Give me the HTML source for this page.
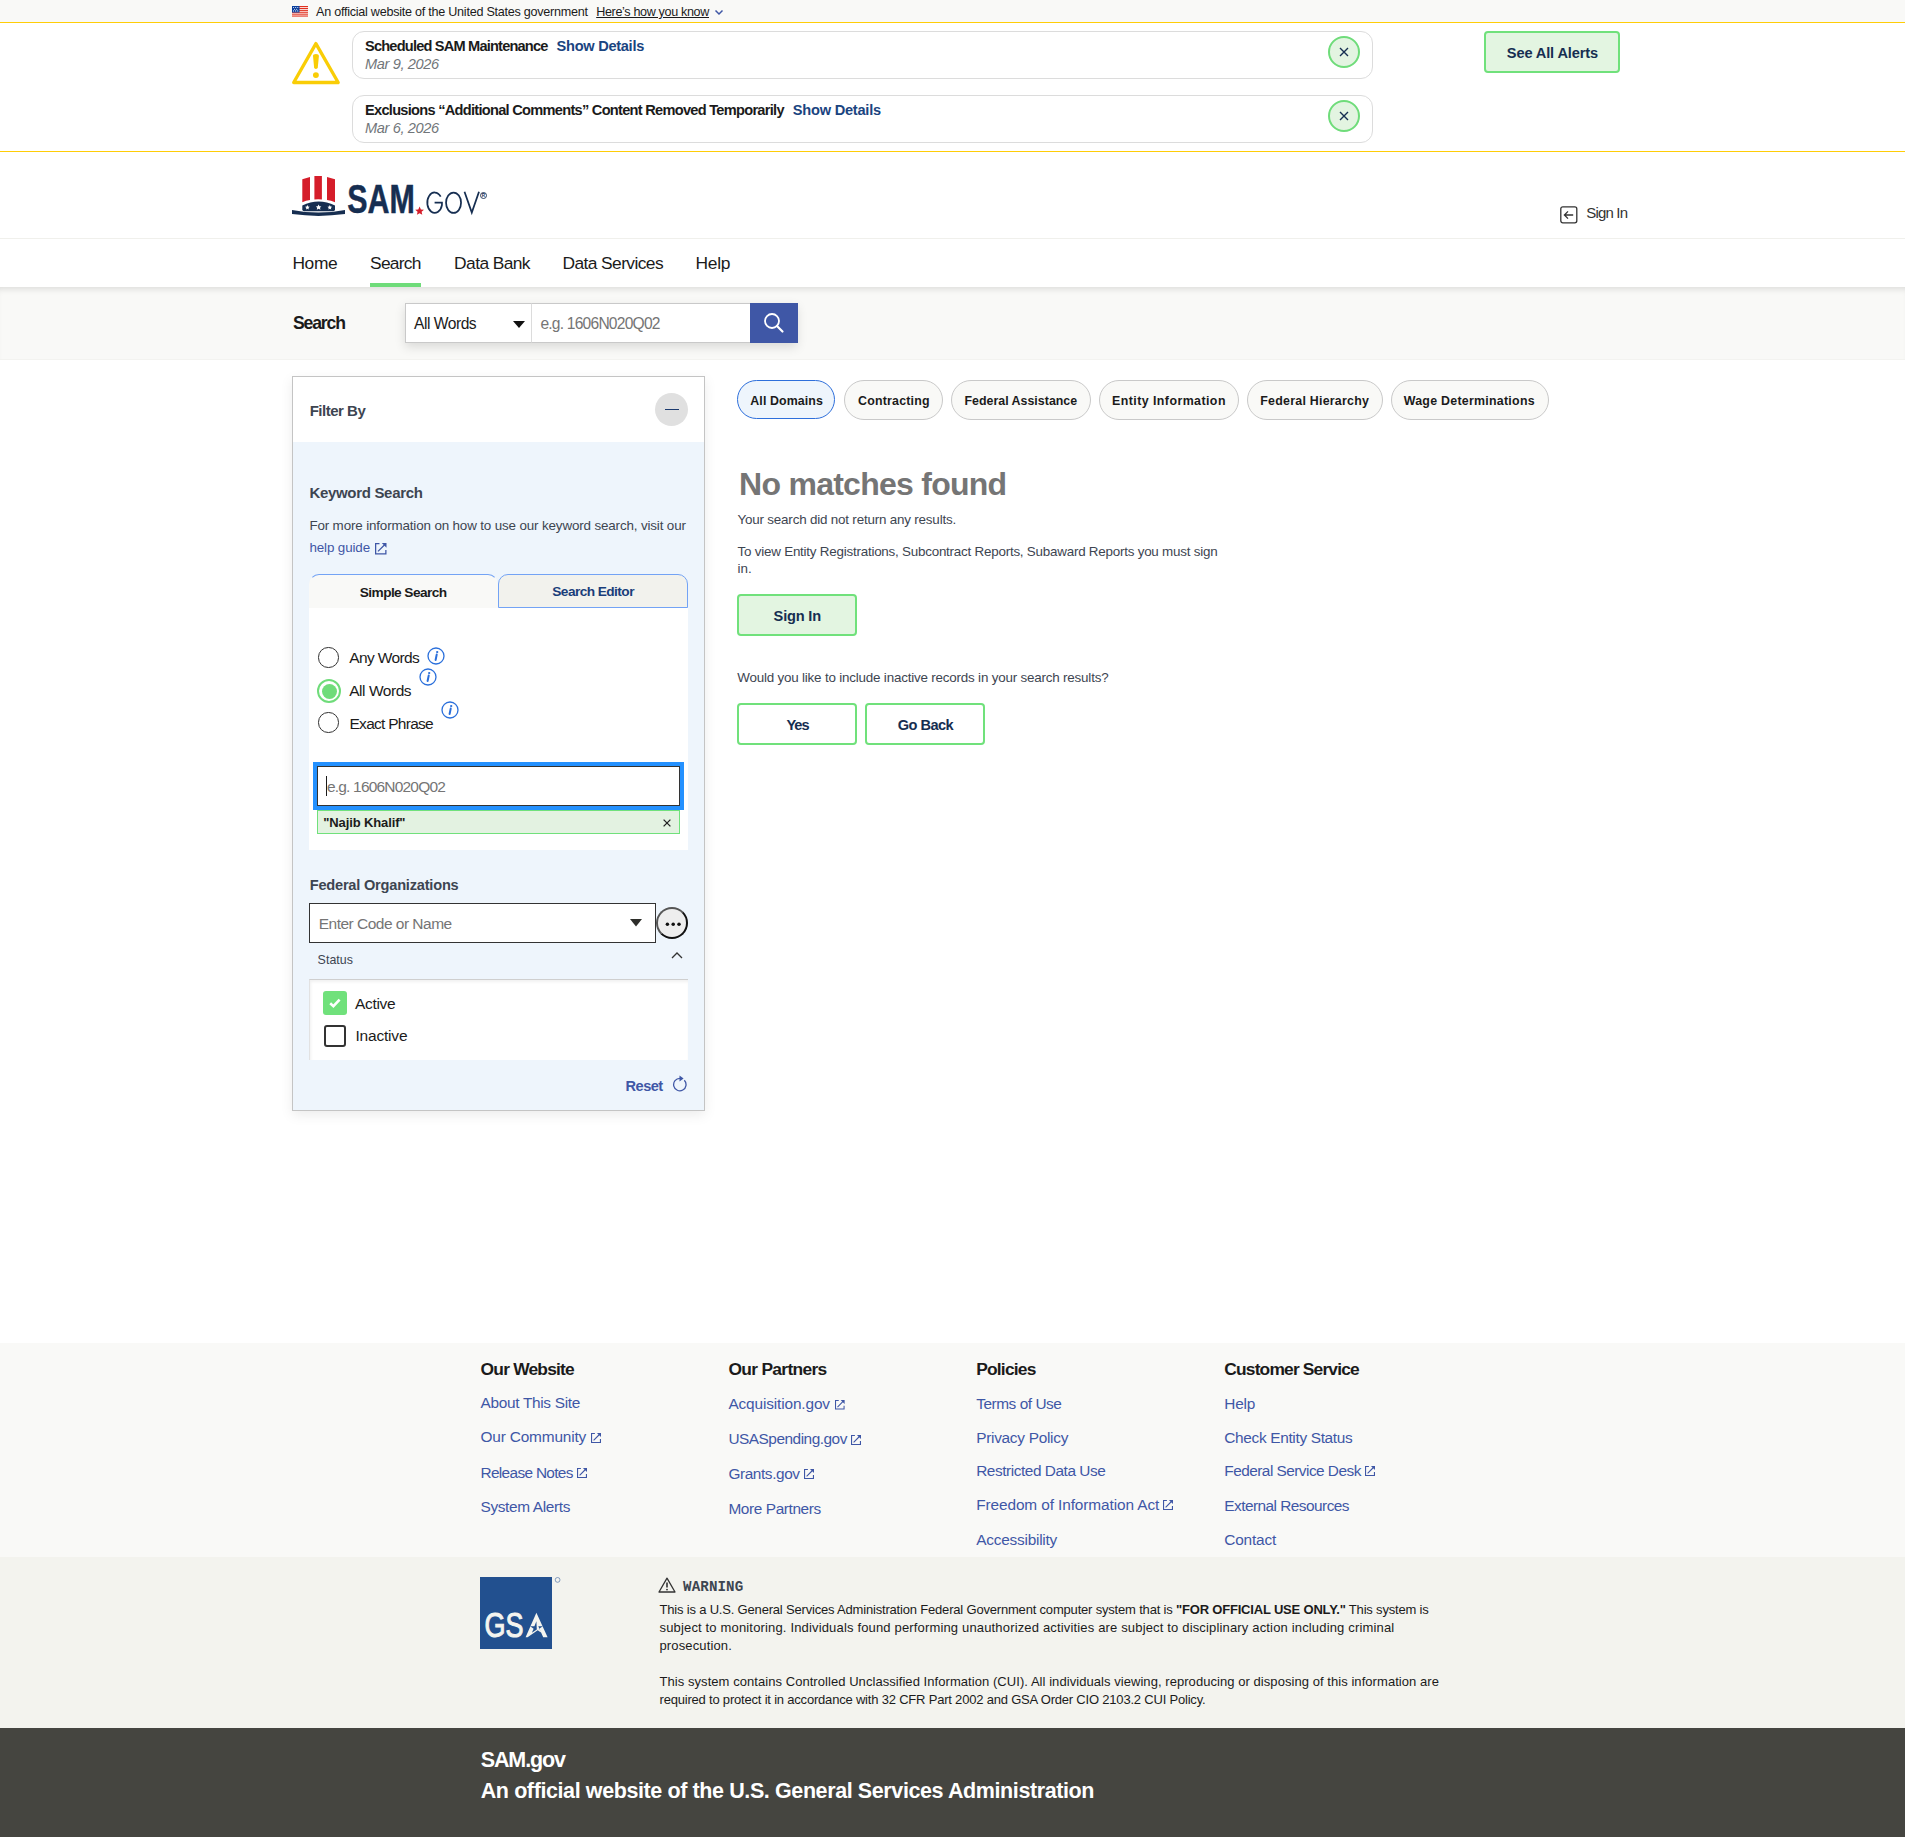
<!DOCTYPE html><html><head><meta charset="utf-8"><style>
*{box-sizing:content-box}
html,body{margin:0;padding:0}
body{width:1905px;height:1837px;position:relative;overflow:hidden;background:#fff;font-family:"Liberation Sans",sans-serif}
.a{position:absolute}
.t{position:absolute;white-space:pre;line-height:1;transform-origin:0 0}
.close{width:28px;height:28px;border:2px solid #6fdc7a;border-radius:50%;background:#e3f4e1}
.gbtn{border:2px solid #70e17b;border-radius:4px;background:#e3f5e1}
.pill{border:1px solid #c9c9c9;border-radius:20px;background:#f9f9f7}
.dot{width:3.6px;height:3.6px;border-radius:50%;background:#111}
</style></head><body>
<!-- gov banner -->
<div class="a" style="left:0;top:0;width:1905px;height:22px;background:#f9f9f7"></div>
<div class="a" style="left:0;top:22px;width:1905px;height:1px;background:#ffcd07"></div>
<svg class="a" style="left:292px;top:6px" width="16" height="11" viewBox="0 0 16 11"><rect width="16" height="11" fill="#fff"/><g fill="#e0301e"><rect y="0" width="16" height="1.1"/><rect y="1.9" width="16" height="1.1"/><rect y="3.8" width="16" height="1.1"/><rect y="5.7" width="16" height="1.1"/><rect y="7.6" width="16" height="1.1"/><rect y="9.5" width="16" height="1.1"/></g><rect width="7.5" height="6.5" fill="#0a3f9e"/><g fill="#fff"><circle cx="1.6" cy="1.5" r=".55"/><circle cx="3.7" cy="1.5" r=".55"/><circle cx="5.8" cy="1.5" r=".55"/><circle cx="2.6" cy="3.2" r=".55"/><circle cx="4.7" cy="3.2" r=".55"/><circle cx="1.6" cy="4.9" r=".55"/><circle cx="3.7" cy="4.9" r=".55"/><circle cx="5.8" cy="4.9" r=".55"/></g></svg>
<svg class="a" style="left:714px;top:9px" width="10" height="7" viewBox="0 0 10 7"><path d="M1.5 1.5L5 5L8.5 1.5" fill="none" stroke="#3f57a6" stroke-width="1.5"/></svg>

<!-- alerts -->
<div class="a" style="left:0;top:151px;width:1905px;height:1px;background:#ffcd07"></div>
<svg class="a" style="left:288px;top:36px" width="56" height="54" viewBox="0 0 56 54"><path d="M27.9 7.6L50.2 46.5H5.7Z" fill="none" stroke="#f9cd06" stroke-width="3.3" stroke-linejoin="round"/><path d="M25 19.7Q25 17.9 27.9 17.9Q30.9 17.9 30.9 19.9L29.8 31.5Q29.6 32.9 27.9 32.9Q26.3 32.9 26.1 31.5Z" fill="#f9cd06"/><circle cx="27.9" cy="39.1" r="2.95" fill="#f9cd06"/></svg>
<div class="a box" style="left:352px;top:31px;width:1019px;height:46px;border:1px solid #dcdcdc;border-radius:12px"></div>
<div class="a box" style="left:352px;top:95px;width:1019px;height:46px;border:1px solid #dcdcdc;border-radius:12px"></div>
<div class="a close" style="left:1328px;top:36px"></div>
<div class="a close" style="left:1328px;top:100px"></div>
<svg class="a" style="left:1339px;top:47px" width="10" height="10" viewBox="0 0 10 10"><path d="M1 1L9 9M9 1L1 9" stroke="#162e51" stroke-width="1.4"/></svg>
<svg class="a" style="left:1339px;top:111px" width="10" height="10" viewBox="0 0 10 10"><path d="M1 1L9 9M9 1L1 9" stroke="#162e51" stroke-width="1.4"/></svg>
<div class="a gbtn" style="left:1484px;top:31px;width:132px;height:38px"></div>

<!-- header -->
<svg class="a" style="left:291px;top:175px" width="197" height="43" viewBox="0 0 197 43">
  <g fill="#d51d2a"><path d="M11.3 4.2L19 2V25.1Q15 25.6 11.3 27.3Z"/><path d="M23.4 1H30.9V24.4Q27.2 24.1 23.4 24.4Z"/><path d="M36 2L44 4.2V27.3Q40 25.6 36 25.1Z"/></g>
  <path d="M11.3 30.6Q27.6 22.3 44 30.6V34.4Q44 36.2 42 36.2H13.3Q11.3 36.2 11.3 34.4Z" fill="#162e51"/>
  <g fill="#fff"><path d="M16.4 30.1l.7 1.5 1.6.2-1.2 1.1.3 1.6-1.4-.8-1.4.8.3-1.6-1.2-1.1 1.6-.2z"/><path d="M27.6 29.4l.9 1.8 1.9.3-1.4 1.3.4 1.9-1.8-.9-1.8.9.4-1.9-1.4-1.3 1.9-.3z"/><path d="M38.8 30.1l.7 1.5 1.6.2-1.2 1.1.3 1.6-1.4-.8-1.4.8.3-1.6-1.2-1.1 1.6-.2z"/></g>
  <path d="M1 35Q27.5 40.2 54 35V39.1Q27.5 42.7 1 39.1Z" fill="#162e51"/>
  <text x="56.3" y="38" font-family="Liberation Sans" font-weight="700" font-size="40" fill="#162e51" stroke="#162e51" stroke-width=".5" textLength="67.5" lengthAdjust="spacingAndGlyphs">SAM</text>
  <path d="M128.6 31.5l1.3 2.9 3.1.3-2.4 2 .7 3.1-2.7-1.6-2.7 1.6.7-3.1-2.4-2 3.1-.3z" fill="#d51d2a"/>
  <g fill="none" stroke="#162e51" stroke-width="1.75"><path d="M149.7 21.6A7.45 10.2 0 1 0 150.95 30.2V27.6H143.6"/><ellipse cx="162.55" cy="27.75" rx="7.5" ry="10.2"/><path d="M173.5 16.7L180.8 37.6L188 16.7"/></g>
  <circle cx="192.5" cy="20.5" r="3" fill="none" stroke="#162e51" stroke-width=".9"/><text x="190.8" y="22.3" font-family="Liberation Sans" font-size="4.6" font-weight="700" fill="#162e51">R</text>
</svg>
<svg class="a" style="left:1560px;top:206px" width="18" height="18" viewBox="0 0 18 18"><rect x=".8" y=".8" width="16" height="16" rx="2" fill="none" stroke="#333" stroke-width="1.3"/><path d="M13.2 9H4.6M8 5.4L4.4 9L8 12.6" fill="none" stroke="#333" stroke-width="1.3"/></svg>
<div class="a" style="left:0;top:238px;width:1905px;height:1px;background:#f0f0ec"></div>
<div class="a" style="left:370px;top:283px;width:51px;height:4px;background:#6fdc7a"></div>

<!-- search band -->
<div class="a" style="left:0;top:287px;width:1905px;height:73px;background:#f9f9f7;box-shadow:inset 0 6px 6px -4px rgba(0,0,0,.12)"></div>
<div class="a" style="left:0;top:359px;width:1905px;height:1px;background:#f3f3f0"></div>
<div class="a" style="left:405px;top:303px;width:392px;height:40px;box-shadow:0 4px 10px rgba(0,0,0,.13)"></div>
<div class="a" style="left:405px;top:303px;width:125px;height:38px;background:#fff;border:1px solid #c9c9c9"></div>
<div class="a" style="left:531px;top:303px;width:218px;height:38px;background:#fff;border:1px solid #c9c9c9;border-left:1px solid #dcdcdc"></div>
<svg class="a" style="left:513px;top:321px" width="12" height="7" viewBox="0 0 12 7"><path d="M0 0H12L6 7Z" fill="#111"/></svg>
<div class="a" style="left:750px;top:303px;width:48px;height:40px;background:#3f57a6"></div>
<svg class="a" style="left:763px;top:312px" width="22" height="22" viewBox="0 0 22 22"><circle cx="9" cy="9" r="7" fill="none" stroke="#fff" stroke-width="1.8"/><path d="M14 14L19.5 19.5" stroke="#fff" stroke-width="2.2" stroke-linecap="round"/></svg>

<!-- filter panel -->
<div class="a" style="left:292px;top:376px;width:411px;height:733px;border:1px solid #c4c4c4;background:#fff;box-shadow:0 4px 12px rgba(0,0,0,.08)"></div>
<div class="a" style="left:293px;top:442px;width:411px;height:668px;background:#eef5fc"></div>
<div class="a" style="left:655px;top:393px;width:33px;height:33px;border-radius:50%;background:#e0e0e0"></div>
<div class="a" style="left:665px;top:408.6px;width:14px;height:1.7px;background:#1b3a6e"></div>
<svg class="a" style="left:375px;top:543px" width="11.5" height="11.5" viewBox="0 0 10 10"><path d="M3.9 .55H.55V9.45H9.45V6.1M2.6 7.3L8.4 1.5" fill="none" stroke="#3f57a6" stroke-width="1.1"/><path d="M5.9 0H10V4.1Z" fill="#3f57a6"/></svg>
<div class="a" style="left:309px;top:608px;width:379px;height:242px;background:#fff"></div>
<div class="a" style="left:309px;top:574px;width:187px;height:33px;background:#f9f9f7;border-top:1.3px solid #73a3f5;border-left:1.3px solid transparent;border-right:1.3px solid transparent;border-radius:10px 10px 0 0"></div>
<div class="a" style="left:498px;top:574px;width:188px;height:32px;background:#f2f2ed;border:1.3px solid #73a3f5;border-radius:10px 10px 0 0"></div>
<div class="a" style="left:318.2px;top:647.2px;width:18.4px;height:18.4px;border:1.7px solid #333;border-radius:50%;background:#fff"></div>
<div class="a" style="left:317px;top:679px;width:20px;height:20px;border:2.2px solid #6fdc7a;border-radius:50%;background:#fff"></div>
<div class="a" style="left:321.5px;top:683.5px;width:15px;height:15px;border-radius:50%;background:#6fdc7a"></div>
<div class="a" style="left:318.2px;top:712.2px;width:18.4px;height:18.4px;border:1.7px solid #333;border-radius:50%;background:#fff"></div>
<svg class="a" style="left:427px;top:647.2px" width="18" height="18" viewBox="0 0 18 18"><circle cx="9" cy="9" r="8" fill="none" stroke="#2a6fdb" stroke-width="1.3"/><path d="M9.7 7.6L8.6 13" stroke="#2a6fdb" stroke-width="2" stroke-linecap="round"/><circle cx="10.2" cy="5.1" r="1.15" fill="#2a6fdb"/></svg>
<svg class="a" style="left:419.1px;top:668.1px" width="18" height="18" viewBox="0 0 18 18"><circle cx="9" cy="9" r="8" fill="none" stroke="#2a6fdb" stroke-width="1.3"/><path d="M9.7 7.6L8.6 13" stroke="#2a6fdb" stroke-width="2" stroke-linecap="round"/><circle cx="10.2" cy="5.1" r="1.15" fill="#2a6fdb"/></svg>
<svg class="a" style="left:441px;top:701px" width="18" height="18" viewBox="0 0 18 18"><circle cx="9" cy="9" r="8" fill="none" stroke="#2a6fdb" stroke-width="1.3"/><path d="M9.7 7.6L8.6 13" stroke="#2a6fdb" stroke-width="2" stroke-linecap="round"/><circle cx="10.2" cy="5.1" r="1.15" fill="#2a6fdb"/></svg>
<div class="a" style="left:313px;top:762px;width:371px;height:48px;background:#2491ff"></div>
<div class="a" style="left:317px;top:766px;width:361px;height:38px;background:#fff;border:1px solid #333"></div>
<div class="a" style="left:326px;top:776px;width:1.3px;height:20px;background:#1b1b1b"></div>
<div class="a" style="left:317px;top:810px;width:361px;height:22px;background:#e3f2e1;border:1px solid #70e17b"></div>
<svg class="a" style="left:663px;top:819px" width="8" height="8" viewBox="0 0 8 8"><path d="M.6 .6L7.4 7.4M7.4 .6L.6 7.4" stroke="#222" stroke-width="1.3"/></svg>
<div class="a" style="left:309px;top:903px;width:345px;height:38px;background:#fff;border:1px solid #333"></div>
<svg class="a" style="left:630px;top:919px" width="12" height="8" viewBox="0 0 12 8"><path d="M0 0H12L6 7.5Z" fill="#2d2e2a"/></svg>
<div class="a" style="left:655.8px;top:907px;width:28px;height:28px;border-radius:50%;background:#eee;border:2px solid #111;border-top-color:#555;border-left-color:#555"></div>
<g></g>
<svg class="a" style="left:664px;top:920px" width="18" height="8" viewBox="0 0 18 8"><circle cx="3.4" cy="4.2" r="1.75" fill="#111"/><circle cx="9.2" cy="4.2" r="1.75" fill="#111"/><circle cx="15" cy="4.2" r="1.75" fill="#111"/></svg>
<svg class="a" style="left:671px;top:951px" width="12" height="8" viewBox="0 0 12 8"><path d="M1 7L6 2L11 7" fill="none" stroke="#333" stroke-width="1.3"/></svg>
<div class="a" style="left:309px;top:979px;width:378px;height:80px;background:#fff;border-top:1.5px solid #cfcfcf;border-left:1.5px solid #e2e2e2;box-shadow:inset 1px 2px 3px rgba(0,0,0,.06)"></div>
<div class="a" style="left:323px;top:991px;width:24px;height:24px;border-radius:3px;background:#70e17b"></div>
<svg class="a" style="left:327px;top:995px" width="16" height="16" viewBox="0 0 16 16"><path d="M3.2 8.3L6.4 11.2L12.6 4.6" fill="none" stroke="#fff" stroke-width="2.6"/></svg>
<div class="a" style="left:324px;top:1025px;width:18px;height:18px;border-radius:3px;border:2px solid #333;background:#fff"></div>
<svg class="a" style="left:672px;top:1075px" width="16" height="17" viewBox="0 0 16 17"><path d="M12.3 5.3A6.2 6.2 0 1 1 8 3.4" fill="none" stroke="#3f57a6" stroke-width="1.3"/><path d="M7.5 .6L11.6 3.5L7.5 6.4Z" fill="#3f57a6"/></svg>

<!-- pills -->
<div class="a pill" style="left:737px;top:380px;width:96px;height:37px;background:#eef5fc;border:1.5px solid #2e6fdb"></div>
<div class="a pill" style="left:844px;top:380px;width:97px;height:38px"></div>
<div class="a pill" style="left:951px;top:380px;width:138px;height:38px"></div>
<div class="a pill" style="left:1099px;top:380px;width:138px;height:38px"></div>
<div class="a pill" style="left:1247px;top:380px;width:134px;height:38px"></div>
<div class="a pill" style="left:1391px;top:380px;width:156px;height:38px"></div>

<!-- results buttons -->
<div class="a gbtn" style="left:737px;top:594px;width:116px;height:38px"></div>
<div class="a gbtn" style="left:737px;top:703px;width:116px;height:38px;background:#fff"></div>
<div class="a gbtn" style="left:865px;top:703px;width:116px;height:38px;background:#fff"></div>

<!-- footer -->
<div class="a" style="left:0;top:1343px;width:1905px;height:214px;background:#f9f9f7"></div>
<div class="a" style="left:0;top:1557px;width:1905px;height:171px;background:#f3f3ee"></div>
<div class="a" style="left:0;top:1728px;width:1905px;height:109px;background:#454540"></div>
<svg class="a" style="left:590.5px;top:1433px" width="10" height="10" viewBox="0 0 10 10"><path d="M3.9 .55H.55V9.45H9.45V6.1M2.6 7.3L8.4 1.5" fill="none" stroke="#3f57a6" stroke-width="1.1"/><path d="M5.9 0H10V4.1Z" fill="#3f57a6"/></svg>
<svg class="a" style="left:577.3px;top:1468px" width="10" height="10" viewBox="0 0 10 10"><path d="M3.9 .55H.55V9.45H9.45V6.1M2.6 7.3L8.4 1.5" fill="none" stroke="#3f57a6" stroke-width="1.1"/><path d="M5.9 0H10V4.1Z" fill="#3f57a6"/></svg>
<svg class="a" style="left:835px;top:1400px" width="9.6" height="9.6" viewBox="0 0 10 10"><path d="M3.9 .55H.55V9.45H9.45V6.1M2.6 7.3L8.4 1.5" fill="none" stroke="#3f57a6" stroke-width="1.1"/><path d="M5.9 0H10V4.1Z" fill="#3f57a6"/></svg>
<svg class="a" style="left:851.2px;top:1434.6px" width="10" height="10" viewBox="0 0 10 10"><path d="M3.9 .55H.55V9.45H9.45V6.1M2.6 7.3L8.4 1.5" fill="none" stroke="#3f57a6" stroke-width="1.1"/><path d="M5.9 0H10V4.1Z" fill="#3f57a6"/></svg>
<svg class="a" style="left:803.5px;top:1469.4px" width="10" height="10" viewBox="0 0 10 10"><path d="M3.9 .55H.55V9.45H9.45V6.1M2.6 7.3L8.4 1.5" fill="none" stroke="#3f57a6" stroke-width="1.1"/><path d="M5.9 0H10V4.1Z" fill="#3f57a6"/></svg>
<svg class="a" style="left:1163.1px;top:1500.4px" width="10" height="10" viewBox="0 0 10 10"><path d="M3.9 .55H.55V9.45H9.45V6.1M2.6 7.3L8.4 1.5" fill="none" stroke="#3f57a6" stroke-width="1.1"/><path d="M5.9 0H10V4.1Z" fill="#3f57a6"/></svg>
<svg class="a" style="left:1364.7px;top:1466.4px" width="10" height="10" viewBox="0 0 10 10"><path d="M3.9 .55H.55V9.45H9.45V6.1M2.6 7.3L8.4 1.5" fill="none" stroke="#3f57a6" stroke-width="1.1"/><path d="M5.9 0H10V4.1Z" fill="#3f57a6"/></svg>
<svg class="a" style="left:480px;top:1577px" width="82" height="72" viewBox="0 0 82 72"><rect width="72" height="72" fill="#22508f"/>
<text x="4.6" y="60" font-family="Liberation Sans" font-size="35" font-weight="400" fill="#f4f4ef" stroke="#f4f4ef" stroke-width="1" textLength="39" lengthAdjust="spacingAndGlyphs">GS</text>
<path d="M56.4 35.7L67.6 60.3H63.2L58.3 49.3H62.8L59.6 51.6L60.9 55.4L57.7 53.2L47.6 60.3H45.6ZM56.4 44.2L54.4 49.3H50.2L53.6 51.8L51.9 55.7L56.8 52.5Z" fill="#f4f4ef" fill-rule="evenodd"/>
<circle cx="77.6" cy="2.9" r="2.4" fill="none" stroke="#5577aa" stroke-width=".7"/></svg>
<svg class="a" style="left:658px;top:1577px" width="18" height="16" viewBox="0 0 18 16"><path d="M9 1.2L17 15H1Z" fill="none" stroke="#333" stroke-width="1.3" stroke-linejoin="round"/><path d="M9 5.5V10.5" stroke="#333" stroke-width="1.6"/><circle cx="9" cy="12.6" r=".9" fill="#333"/></svg>

<div class="t" id="t0" style="left:316.00px;top:6.000px;font-size:12.6px;font-weight:400;color:#1b1b1b;font-family:'Liberation Sans',sans-serif;letter-spacing:-0.253px;">An official website of the United States government</div>
<div class="t" id="t1" style="left:596.20px;top:6.000px;font-size:12.6px;font-weight:400;color:#1b1b1b;font-family:'Liberation Sans',sans-serif;letter-spacing:-0.351px;text-decoration:underline;text-underline-offset:1px;">Here’s how you know</div>
<div class="t" id="t2" style="left:365.00px;top:39.000px;font-size:14.6px;font-weight:700;color:#1b1b1b;font-family:'Liberation Sans',sans-serif;letter-spacing:-0.805px;">Scheduled SAM Maintenance</div>
<div class="t" id="t3" style="left:556.60px;top:39.000px;font-size:14.6px;font-weight:700;color:#1a4480;font-family:'Liberation Sans',sans-serif;letter-spacing:-0.286px;">Show Details</div>
<div class="t" id="t4" style="left:365.00px;top:57.000px;font-size:14.6px;font-weight:400;color:#71767a;font-family:'Liberation Sans',sans-serif;font-style:italic;letter-spacing:-0.381px;">Mar 9, 2026</div>
<div class="t" id="t5" style="left:365.00px;top:103.000px;font-size:14.6px;font-weight:700;color:#1b1b1b;font-family:'Liberation Sans',sans-serif;letter-spacing:-0.719px;">Exclusions “Additional Comments” Content Removed Temporarily</div>
<div class="t" id="t6" style="left:792.80px;top:103.000px;font-size:14.6px;font-weight:700;color:#1a4480;font-family:'Liberation Sans',sans-serif;letter-spacing:-0.227px;">Show Details</div>
<div class="t" id="t7" style="left:365.00px;top:121.000px;font-size:14.6px;font-weight:400;color:#71767a;font-family:'Liberation Sans',sans-serif;font-style:italic;letter-spacing:-0.381px;">Mar 6, 2026</div>
<div class="t" id="t8" style="left:1506.80px;top:46.000px;font-size:14.6px;font-weight:700;color:#162e51;font-family:'Liberation Sans',sans-serif;letter-spacing:-0.130px;">See All Alerts</div>
<div class="t" id="t9" style="left:1586.20px;top:205.000px;font-size:15.0px;font-weight:400;color:#333333;font-family:'Liberation Sans',sans-serif;letter-spacing:-0.815px;">Sign In</div>
<div class="t" id="t10" style="left:292.40px;top:255.000px;font-size:17.4px;font-weight:400;color:#1b1b1b;font-family:'Liberation Sans',sans-serif;letter-spacing:-0.373px;">Home</div>
<div class="t" id="t11" style="left:370.10px;top:255.000px;font-size:17.4px;font-weight:400;color:#1b1b1b;font-family:'Liberation Sans',sans-serif;letter-spacing:-0.768px;">Search</div>
<div class="t" id="t12" style="left:454.10px;top:255.000px;font-size:17.4px;font-weight:400;color:#1b1b1b;font-family:'Liberation Sans',sans-serif;letter-spacing:-0.591px;">Data Bank</div>
<div class="t" id="t13" style="left:562.50px;top:255.000px;font-size:17.4px;font-weight:400;color:#1b1b1b;font-family:'Liberation Sans',sans-serif;letter-spacing:-0.596px;">Data Services</div>
<div class="t" id="t14" style="left:695.60px;top:255.000px;font-size:17.4px;font-weight:400;color:#1b1b1b;font-family:'Liberation Sans',sans-serif;letter-spacing:-0.345px;">Help</div>
<div class="t" id="t15" style="left:292.60px;top:314.000px;font-size:18.2px;font-weight:700;color:#1b1b1b;font-family:'Liberation Sans',sans-serif;letter-spacing:-1.200px;transform:scaleX(0.9687);">Search</div>
<div class="t" id="t16" style="left:414.00px;top:316.000px;font-size:15.6px;font-weight:400;color:#1b1b1b;font-family:'Liberation Sans',sans-serif;letter-spacing:-0.471px;">All Words</div>
<div class="t" id="t17" style="left:540.40px;top:316.000px;font-size:15.6px;font-weight:400;color:#757575;font-family:'Liberation Sans',sans-serif;letter-spacing:-0.781px;">e.g. 1606N020Q02</div>
<div class="t" id="t18" style="left:309.70px;top:403.000px;font-size:15.0px;font-weight:700;color:#3d4551;font-family:'Liberation Sans',sans-serif;letter-spacing:-0.491px;">Filter By</div>
<div class="t" id="t19" style="left:309.40px;top:485.000px;font-size:15.0px;font-weight:700;color:#3d4551;font-family:'Liberation Sans',sans-serif;letter-spacing:-0.310px;">Keyword Search</div>
<div class="t" id="t20" style="left:309.40px;top:519.000px;font-size:13.4px;font-weight:400;color:#3d4551;font-family:'Liberation Sans',sans-serif;letter-spacing:-0.143px;">For more information on how to use our keyword search, visit our</div>
<div class="t" id="t21" style="left:309.40px;top:541.000px;font-size:13.4px;font-weight:400;color:#3f57a6;font-family:'Liberation Sans',sans-serif;letter-spacing:-0.121px;">help guide</div>
<div class="t" id="t22" style="left:359.80px;top:586.000px;font-size:13.7px;font-weight:700;color:#1b1b1b;font-family:'Liberation Sans',sans-serif;letter-spacing:-0.588px;">Simple Search</div>
<div class="t" id="t23" style="left:552.30px;top:585.000px;font-size:13.7px;font-weight:700;color:#1a3e7a;font-family:'Liberation Sans',sans-serif;letter-spacing:-0.569px;">Search Editor</div>
<div class="t" id="t24" style="left:349.20px;top:650.000px;font-size:15.5px;font-weight:400;color:#1b1b1b;font-family:'Liberation Sans',sans-serif;letter-spacing:-0.615px;">Any Words</div>
<div class="t" id="t25" style="left:349.20px;top:683.000px;font-size:15.5px;font-weight:400;color:#1b1b1b;font-family:'Liberation Sans',sans-serif;letter-spacing:-0.450px;">All Words</div>
<div class="t" id="t26" style="left:349.50px;top:716.000px;font-size:15.5px;font-weight:400;color:#1b1b1b;font-family:'Liberation Sans',sans-serif;letter-spacing:-0.724px;">Exact Phrase</div>
<div class="t" id="t27" style="left:327.00px;top:779.000px;font-size:15.5px;font-weight:400;color:#757575;font-family:'Liberation Sans',sans-serif;letter-spacing:-0.812px;">e.g. 1606N020Q02</div>
<div class="t" id="t28" style="left:323.30px;top:816.000px;font-size:13.0px;font-weight:700;color:#1b1b1b;font-family:'Liberation Sans',sans-serif;letter-spacing:-0.125px;">"Najib Khalif"</div>
<div class="t" id="t29" style="left:309.70px;top:878.000px;font-size:14.6px;font-weight:700;color:#3d4551;font-family:'Liberation Sans',sans-serif;letter-spacing:-0.213px;">Federal Organizations</div>
<div class="t" id="t30" style="left:318.70px;top:916.000px;font-size:15.5px;font-weight:400;color:#757575;font-family:'Liberation Sans',sans-serif;letter-spacing:-0.509px;">Enter Code or Name</div>
<div class="t" id="t31" style="left:317.60px;top:954.000px;font-size:12.4px;font-weight:400;color:#3d4551;font-family:'Liberation Sans',sans-serif;letter-spacing:0.043px;">Status</div>
<div class="t" id="t32" style="left:355.10px;top:996.000px;font-size:15.5px;font-weight:400;color:#1b1b1b;font-family:'Liberation Sans',sans-serif;letter-spacing:-0.353px;">Active</div>
<div class="t" id="t33" style="left:355.50px;top:1028.000px;font-size:15.5px;font-weight:400;color:#1b1b1b;font-family:'Liberation Sans',sans-serif;letter-spacing:-0.203px;">Inactive</div>
<div class="t" id="t34" style="left:625.50px;top:1079.000px;font-size:14.6px;font-weight:700;color:#3f57a6;font-family:'Liberation Sans',sans-serif;letter-spacing:-0.510px;">Reset</div>
<div class="t" id="t35" style="left:750.30px;top:395.000px;font-size:12.4px;font-weight:700;color:#1b1b1b;font-family:'Liberation Sans',sans-serif;letter-spacing:0.099px;">All Domains</div>
<div class="t" id="t36" style="left:858.00px;top:395.000px;font-size:12.4px;font-weight:700;color:#1b1b1b;font-family:'Liberation Sans',sans-serif;letter-spacing:0.206px;">Contracting</div>
<div class="t" id="t37" style="left:964.40px;top:395.000px;font-size:12.4px;font-weight:700;color:#1b1b1b;font-family:'Liberation Sans',sans-serif;letter-spacing:0.017px;">Federal Assistance</div>
<div class="t" id="t38" style="left:1112.00px;top:395.000px;font-size:12.4px;font-weight:700;color:#1b1b1b;font-family:'Liberation Sans',sans-serif;letter-spacing:0.438px;">Entity Information</div>
<div class="t" id="t39" style="left:1260.30px;top:395.000px;font-size:12.4px;font-weight:700;color:#1b1b1b;font-family:'Liberation Sans',sans-serif;letter-spacing:0.242px;">Federal Hierarchy</div>
<div class="t" id="t40" style="left:1403.70px;top:395.000px;font-size:12.4px;font-weight:700;color:#1b1b1b;font-family:'Liberation Sans',sans-serif;letter-spacing:0.261px;">Wage Determinations</div>
<div class="t" id="t41" style="left:739.10px;top:468.000px;font-size:32px;font-weight:700;color:#757575;font-family:'Liberation Sans',sans-serif;letter-spacing:-0.739px;">No matches found</div>
<div class="t" id="t42" style="left:737.50px;top:513.000px;font-size:13.4px;font-weight:400;color:#3d4551;font-family:'Liberation Sans',sans-serif;letter-spacing:-0.187px;">Your search did not return any results.</div>
<div class="t" id="t43" style="left:737.60px;top:545.000px;font-size:13.4px;font-weight:400;color:#3d4551;font-family:'Liberation Sans',sans-serif;letter-spacing:-0.224px;">To view Entity Registrations, Subcontract Reports, Subaward Reports you must sign</div>
<div class="t" id="t44" style="left:737.60px;top:562.000px;font-size:13.4px;font-weight:400;color:#3d4551;font-family:'Liberation Sans',sans-serif;">in.</div>
<div class="t" id="t45" style="left:773.60px;top:609.000px;font-size:14.6px;font-weight:700;color:#162e51;font-family:'Liberation Sans',sans-serif;letter-spacing:-0.179px;">Sign In</div>
<div class="t" id="t46" style="left:737.20px;top:671.000px;font-size:13.4px;font-weight:400;color:#3d4551;font-family:'Liberation Sans',sans-serif;letter-spacing:-0.190px;">Would you like to include inactive records in your search results?</div>
<div class="t" id="t47" style="left:786.40px;top:718.000px;font-size:14.6px;font-weight:700;color:#162e51;font-family:'Liberation Sans',sans-serif;letter-spacing:-0.957px;">Yes</div>
<div class="t" id="t48" style="left:897.70px;top:718.000px;font-size:14.6px;font-weight:700;color:#162e51;font-family:'Liberation Sans',sans-serif;letter-spacing:-0.531px;">Go Back</div>
<div class="t" id="t49" style="left:480.60px;top:1361.000px;font-size:17.4px;font-weight:700;color:#1b1b1b;font-family:'Liberation Sans',sans-serif;letter-spacing:-0.793px;">Our Website</div>
<div class="t" id="t50" style="left:728.40px;top:1361.000px;font-size:17.4px;font-weight:700;color:#1b1b1b;font-family:'Liberation Sans',sans-serif;letter-spacing:-0.686px;">Our Partners</div>
<div class="t" id="t51" style="left:976.20px;top:1361.000px;font-size:17.4px;font-weight:700;color:#1b1b1b;font-family:'Liberation Sans',sans-serif;letter-spacing:-0.792px;">Policies</div>
<div class="t" id="t52" style="left:1224.30px;top:1361.000px;font-size:17.4px;font-weight:700;color:#1b1b1b;font-family:'Liberation Sans',sans-serif;letter-spacing:-0.831px;">Customer Service</div>
<div class="t" id="t53" style="left:480.50px;top:1395.000px;font-size:15.4px;font-weight:400;color:#3f57a6;font-family:'Liberation Sans',sans-serif;letter-spacing:-0.306px;">About This Site</div>
<div class="t" id="t54" style="left:480.50px;top:1429.000px;font-size:15.4px;font-weight:400;color:#3f57a6;font-family:'Liberation Sans',sans-serif;letter-spacing:-0.167px;">Our Community</div>
<div class="t" id="t55" style="left:480.50px;top:1465.000px;font-size:15.4px;font-weight:400;color:#3f57a6;font-family:'Liberation Sans',sans-serif;letter-spacing:-0.666px;">Release Notes</div>
<div class="t" id="t56" style="left:480.50px;top:1499.000px;font-size:15.4px;font-weight:400;color:#3f57a6;font-family:'Liberation Sans',sans-serif;letter-spacing:-0.353px;">System Alerts</div>
<div class="t" id="t57" style="left:728.40px;top:1396.000px;font-size:15.4px;font-weight:400;color:#3f57a6;font-family:'Liberation Sans',sans-serif;letter-spacing:-0.135px;">Acquisition.gov</div>
<div class="t" id="t58" style="left:728.40px;top:1431.000px;font-size:15.4px;font-weight:400;color:#3f57a6;font-family:'Liberation Sans',sans-serif;letter-spacing:-0.485px;">USASpending.gov</div>
<div class="t" id="t59" style="left:728.40px;top:1466.000px;font-size:15.4px;font-weight:400;color:#3f57a6;font-family:'Liberation Sans',sans-serif;letter-spacing:-0.408px;">Grants.gov</div>
<div class="t" id="t60" style="left:728.40px;top:1501.000px;font-size:15.4px;font-weight:400;color:#3f57a6;font-family:'Liberation Sans',sans-serif;letter-spacing:-0.394px;">More Partners</div>
<div class="t" id="t61" style="left:976.20px;top:1396.000px;font-size:15.4px;font-weight:400;color:#3f57a6;font-family:'Liberation Sans',sans-serif;letter-spacing:-0.446px;">Terms of Use</div>
<div class="t" id="t62" style="left:976.20px;top:1430.000px;font-size:15.4px;font-weight:400;color:#3f57a6;font-family:'Liberation Sans',sans-serif;letter-spacing:-0.278px;">Privacy Policy</div>
<div class="t" id="t63" style="left:976.20px;top:1463.000px;font-size:15.4px;font-weight:400;color:#3f57a6;font-family:'Liberation Sans',sans-serif;letter-spacing:-0.448px;">Restricted Data Use</div>
<div class="t" id="t64" style="left:976.20px;top:1497.000px;font-size:15.4px;font-weight:400;color:#3f57a6;font-family:'Liberation Sans',sans-serif;letter-spacing:-0.102px;">Freedom of Information Act</div>
<div class="t" id="t65" style="left:976.20px;top:1532.000px;font-size:15.4px;font-weight:400;color:#3f57a6;font-family:'Liberation Sans',sans-serif;letter-spacing:-0.225px;">Accessibility</div>
<div class="t" id="t66" style="left:1224.30px;top:1396.000px;font-size:15.4px;font-weight:400;color:#3f57a6;font-family:'Liberation Sans',sans-serif;letter-spacing:-0.239px;">Help</div>
<div class="t" id="t67" style="left:1224.30px;top:1430.000px;font-size:15.4px;font-weight:400;color:#3f57a6;font-family:'Liberation Sans',sans-serif;letter-spacing:-0.327px;">Check Entity Status</div>
<div class="t" id="t68" style="left:1224.30px;top:1463.000px;font-size:15.4px;font-weight:400;color:#3f57a6;font-family:'Liberation Sans',sans-serif;letter-spacing:-0.531px;">Federal Service Desk</div>
<div class="t" id="t69" style="left:1224.30px;top:1498.000px;font-size:15.4px;font-weight:400;color:#3f57a6;font-family:'Liberation Sans',sans-serif;letter-spacing:-0.534px;">External Resources</div>
<div class="t" id="t70" style="left:1224.30px;top:1532.000px;font-size:15.4px;font-weight:400;color:#3f57a6;font-family:'Liberation Sans',sans-serif;letter-spacing:-0.192px;">Contact</div>
<div class="t" id="t71" style="left:683.10px;top:1580.000px;font-size:14.2px;font-weight:700;color:#3d4551;font-family:'Liberation Mono',monospace;letter-spacing:0.084px;">WARNING</div>
<div class="t" id="t72" style="left:659.50px;top:1603.000px;font-size:13.0px;font-weight:400;color:#1b1b1b;font-family:'Liberation Sans',sans-serif;letter-spacing:-0.186px;">This is a U.S. General Services Administration Federal Government computer system that is <b>"FOR OFFICIAL USE ONLY."</b> This system is</div>
<div class="t" id="t73" style="left:659.50px;top:1621.000px;font-size:13.0px;font-weight:400;color:#1b1b1b;font-family:'Liberation Sans',sans-serif;letter-spacing:0.162px;">subject to monitoring. Individuals found performing unauthorized activities are subject to disciplinary action including criminal</div>
<div class="t" id="t74" style="left:659.50px;top:1639.000px;font-size:13.0px;font-weight:400;color:#1b1b1b;font-family:'Liberation Sans',sans-serif;letter-spacing:0.139px;">prosecution.</div>
<div class="t" id="t75" style="left:659.50px;top:1675.000px;font-size:13.0px;font-weight:400;color:#1b1b1b;font-family:'Liberation Sans',sans-serif;letter-spacing:0.057px;">This system contains Controlled Unclassified Information (CUI). All individuals viewing, reproducing or disposing of this information are</div>
<div class="t" id="t76" style="left:659.50px;top:1693.000px;font-size:13.0px;font-weight:400;color:#1b1b1b;font-family:'Liberation Sans',sans-serif;letter-spacing:-0.199px;">required to protect it in accordance with 32 CFR Part 2002 and GSA Order CIO 2103.2 CUI Policy.</div>
<div class="t" id="t77" style="left:480.70px;top:1750.000px;font-size:21.5px;font-weight:700;color:#ffffff;font-family:'Liberation Sans',sans-serif;letter-spacing:-1.098px;">SAM.gov</div>
<div class="t" id="t78" style="left:480.70px;top:1781.000px;font-size:21.5px;font-weight:700;color:#ffffff;font-family:'Liberation Sans',sans-serif;letter-spacing:-0.397px;">An official website of the U.S. General Services Administration</div>
</body></html>
